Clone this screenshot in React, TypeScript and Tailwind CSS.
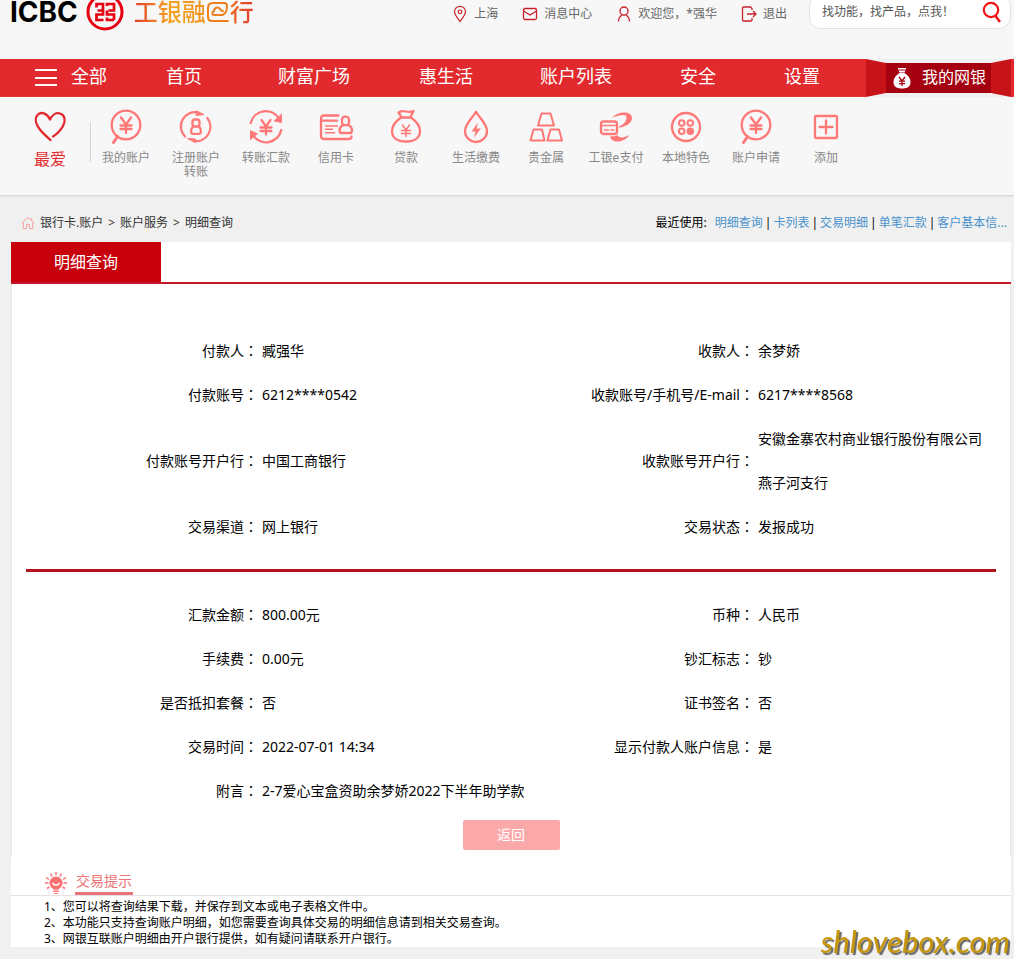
import type { ReactNode } from "react";

function Icon({ children }: { children: ReactNode }) {
  return (
    <svg
      width="36"
      height="36"
      viewBox="0 0 36 36"
      fill="none"
      stroke="#ff7878"
      strokeWidth="2.3"
      strokeLinecap="round"
      strokeLinejoin="round"
      aria-hidden="true"
    >
      {children}
    </svg>
  );
}

const MagnifierIcon = () => (
  <Icon>
    <circle cx="18" cy="17" r="14.3" />
    <path d="M9.5 28.5l-4 6" strokeWidth="3" />
    <path d="M13 9.5l5 7 5-7M18 16.5v8.5M12.5 17.5h11M12.5 21h11" />
  </Icon>
);

const RegisterIcon = () => (
  <Icon>
    <path d="M7 28.5A14.3 14.3 0 0 1 20 4.4M29.3 10A14.3 14.3 0 0 1 16 33" />
    <path d="M18.5 3l7.5 3.5-7.5 1zM17 34.5l-7.5-4 7.5.5z" fill="#ff7878" strokeWidth="1" />
    <rect x="14.5" y="11.5" width="7" height="7" rx="2.5" />
    <path d="M15.5 18.5c-2 1-2.5 3-2.3 6q.1 1.3 1.3 1.3h7q1.2 0 1.3-1.3c.2-3-.3-5-2.3-6" />
  </Icon>
);

const TransferIcon = () => (
  <Icon>
    <path d="M2.7 15A15.5 15.5 0 0 1 31 10.5M33.3 22A15.5 15.5 0 0 1 5 27" />
    <path d="M33.5 6.5v8l-7-1.5zM2.5 23v8.5l6.5-5.5z" fill="#ff7878" strokeWidth="1" />
    <path d="M13.5 12l4.5 6.5 4.5-6.5M18 18.5v8M12.5 19.5h11M12.5 23h11" />
  </Icon>
);

const CardIcon = () => (
  <Icon>
    <path d="M20.5 7.5H6q-3 0-3 3v17.5q0 3 3 3h25q2.5 0 2.5-2.5M4 12.7h15" />
    <path d="M7.5 18h12M7.5 21.3h7M7.5 24.7h9" strokeWidth="1.5" />
    <rect x="24" y="8.7" width="7" height="8.5" rx="3" />
    <path d="M24.5 17.5q-3 1.5-3 5 0 2.5 2 2.5h8.5q2 0 2-2.5 0-3.5-3-5" />
  </Icon>
);

const LoanIcon = () => (
  <Icon>
    <path d="M13.5 9L10.5 4.5q3.5-2 7.5-1t7.5-.5L22.5 9" />
    <path d="M13 9.5h10c5.500 4 9 9 9 13.500 0 7-5.500 10.500-14 10.500S4 30 4 23c0-4.500 3.500-9.500 9-13.500z" />
    <path d="M14.5 17l3.5 5 3.5-5M18 22v6.5M13.5 22.5h9M13.5 25.5h9" strokeWidth="1.5" />
  </Icon>
);

const UtilityIcon = () => (
  <Icon>
    <path d="M18 3.7c3.5 6.3 11 12 11 19.3a11 11 0 0 1-22 0c0-7.3 7.5-13 11-19.3z" />
    <path d="M20 14.5l-6.5 9h4l-1.5 6 7-9h-4.5z" fill="#ff7878" stroke="none" />
  </Icon>
);

const GoldIcon = () => (
  <Icon>
    <path d="M13.5 5.500h9L26 17.500H10z" strokeWidth="2" />
    <path d="M5.5 21.500h8.500l2.500 11H2.500zM22.500 21.500H31l3 11H19.500z" strokeWidth="2" />
  </Icon>
);

const EPayIcon = () => (
  <Icon>
    <path
      d="M14 9.5C17 6.5 21 4.5 26 4.5c5 0 8 2 8 5.5 0 5.5-7 9-14 10-3 8 1.5 12.5 11.5 7-3 4-7 6.500-12 6.500-4.500 0-7-2-7.500-5.500l3-9L22 18c4-1.500 6.500-5 6.500-8.500 0-3.500-5-3-14.500 0z"
      fill="#ff7878"
      stroke="none"
    />
    <rect x="3" y="13.5" width="16" height="12.5" rx="2.5" stroke="#f7f7f7" strokeWidth="4.5" fill="#f7f7f7" />
    <rect x="3" y="13.5" width="16" height="12.5" rx="2.5" />
    <path d="M3.5 17.5h15M6.5 22h4M13 22h3" strokeWidth="1.5" />
  </Icon>
);

const LocalIcon = () => (
  <Icon>
    <circle cx="18" cy="19" r="14" />
    <circle cx="13.7" cy="15" r="2.8" strokeWidth="2" />
    <circle cx="22.3" cy="15" r="2.8" strokeWidth="2" />
    <circle cx="13.7" cy="23.3" r="2.8" strokeWidth="2" />
    <circle cx="22.3" cy="23.3" r="2.8" strokeWidth="2" fill="#ff7878" />
  </Icon>
);

const AddIcon = () => (
  <Icon>
    <rect x="7" y="8" width="22" height="22" rx="1" />
    <path d="M18 12.5v13M11.5 19h13" />
  </Icon>
);

const shortcuts = [
  { label: "我的账户", icon: <MagnifierIcon /> },
  { label: "注册账户转账", icon: <RegisterIcon /> },
  { label: "转账汇款", icon: <TransferIcon /> },
  { label: "信用卡", icon: <CardIcon /> },
  { label: "贷款", icon: <LoanIcon /> },
  { label: "生活缴费", icon: <UtilityIcon /> },
  { label: "贵金属", icon: <GoldIcon /> },
  { label: "工银e支付", icon: <EPayIcon /> },
  { label: "本地特色", icon: <LocalIcon /> },
  { label: "账户申请", icon: <MagnifierIcon /> },
  { label: "添加", icon: <AddIcon /> },
];

const menu = [
  { label: "首页", width: "w-[120px]" },
  { label: "财富广场", width: "w-[140px]" },
  { label: "惠生活", width: "w-[124px]" },
  { label: "账户列表", width: "w-[136px]" },
  { label: "安全", width: "w-[108px]" },
  { label: "设置", width: "w-[100px]" },
];

const recent = ["明细查询", "卡列表", "交易明细", "单笔汇款", "客户基本信..."];

const parties = [
  ["付款人", "臧强华", "收款人", "余梦娇"],
  ["付款账号", "6212****0542", "收款账号/手机号/E-mail", "6217****8568"],
  ["付款账号开户行", "中国工商银行", "收款账号开户行", "安徽金寨农村商业银行股份有限公司燕子河支行"],
  ["交易渠道", "网上银行", "交易状态", "发报成功"],
];

const amounts = [
  ["汇款金额", "800.00元", "币种", "人民币"],
  ["手续费", "0.00元", "钞汇标志", "钞"],
  ["是否抵扣套餐", "否", "证书签名", "否"],
  ["交易时间", "2022-07-01 14:34", "显示付款人账户信息", "是"],
  ["附言", "2-7爱心宝盒资助余梦娇2022下半年助学款"],
];

function Label({ text }: { text: string }) {
  return (
    <th scope="row" className="w-1/4 pr-0.5 text-right font-normal whitespace-nowrap">
      {text}
      <span className="font-['Noto_Sans_CJK_TC',sans-serif] leading-none">：</span>
    </th>
  );
}

function DetailTable({ rows }: { rows: string[][] }) {
  return (
    <div className="pr-1.5">
      <table className="w-full table-fixed border-collapse text-sm leading-11">
        <tbody>
          {rows.map((r) => (
            <tr key={r[0]}>
              <Label text={r[0]} />
              <td className="w-1/4 pl-0.5" colSpan={r.length === 2 ? 3 : 1}>
                {r[1]}
              </td>
              {r.length === 4 && (
                <>
                  <Label text={r[2]} />
                  <td className="w-1/4 pr-3 pl-0.5">{r[3]}</td>
                </>
              )}
            </tr>
          ))}
        </tbody>
      </table>
    </div>
  );
}

function Logo() {
  return (
    <a href="#" className="flex h-6 items-center pl-2.5" aria-label="ICBC 工银融e行">
      <span className="font-['Inter',sans-serif] text-[28px] leading-6 font-bold text-black">ICBC</span>
      <svg className="ml-2 shrink-0" width="38" height="38" viewBox="0 0 38 38" fill="none" stroke="#e60012">
        <circle cx="19" cy="19" r="17" strokeWidth="3" />
        <path
          d="M10.5 14.5V11H17v6.500h-5.500M17 17.500v4h-6.500V27H17.500M28 27h-7v-2.500M21 13V11h7v6.500h-5.500M21 17.500v4h7V27"
          strokeWidth="2.7"
        />
      </svg>
      <span className="ml-2.5 bg-linear-to-r from-[#e2382c] via-[#f5a21e] to-[#f0901a] bg-clip-text text-2xl leading-6 font-medium text-transparent">
        工银融
      </span>
      <svg
        width="24"
        height="24"
        viewBox="0 0 24 24"
        fill="none"
        stroke="#ee7f1c"
        strokeWidth="2"
        strokeLinecap="round"
      >
        <path d="M22 21H6q-4 0-4-4V8q0-5 5-5h11q3 0 3 3c0 5-2 9-6 9H8c-2 0-2.5-3 0-4 0-3 4-5 6-2 1 1 1 2 3 2" />
      </svg>
      <span className="bg-linear-to-r from-[#ec6a22] to-[#e2382c] bg-clip-text text-2xl leading-6 font-medium text-transparent">
        行
      </span>
    </a>
  );
}

export default function App() {
  return (
    <div className="min-h-screen bg-[#f0f0f0] font-['Noto_Sans','Noto_Sans_CJK_SC',sans-serif] text-black">
      {/* Top bar */}
      <header className="flex h-[59px] items-start justify-between bg-[#f7f7f7] pr-[3px]">
        <Logo />
        <div className="flex items-start text-xs text-[#666]">
          <div className="flex h-7 items-center gap-6 pr-[22px]">
            <a href="#" className="flex items-center gap-1.5">
              <svg width="16" height="18" viewBox="0 0 16 18" fill="none" stroke="#c8202c" strokeWidth="1.2">
                <path d="M8 16.5C5 12.5 2.5 9.5 2.5 6.8a5.5 5.5 0 0 1 11 0c0 2.7-2.5 5.7-5.5 9.7z" />
                <circle cx="8" cy="6.8" r="1.8" />
              </svg>
              上海
            </a>
            <a href="#" className="flex items-center gap-1.5">
              <svg width="16" height="18" viewBox="0 0 16 18" fill="none" stroke="#c8202c" strokeWidth="1.3">
                <rect x="1.5" y="3.5" width="13" height="11" rx="1.5" />
                <path d="M1.5 6l6.5 4 6.5-4" />
              </svg>
              消息中心
            </a>
            <a href="#" className="flex items-center gap-1.5">
              <svg width="16" height="18" viewBox="0 0 16 18" fill="none" stroke="#c8202c" strokeWidth="1.3">
                <circle cx="8" cy="6" r="4" />
                <path d="M2.5 16.5c0-3.5 1.5-5.5 4-6.5M13.5 16.5c0-3.5-1.5-5.5-4-6.5" />
              </svg>
              欢迎您，*强华
            </a>
            <a href="#" className="flex items-center gap-1.5">
              <svg width="16" height="18" viewBox="0 0 16 18" fill="none" stroke="#c8202c" strokeWidth="1.3">
                <path d="M11 5V3.5L9.5 2h-7q-1 0-1 1v12q0 1 1 1h7.5q1 0 1-1v-2M6 9h9M12 6l3 3-3 3" />
              </svg>
              退出
            </a>
          </div>
          <form className="-mt-1.5 flex h-[35px] w-[202px] items-center rounded-xl border border-[#e2e2e2] bg-white pr-2 pl-3">
            <input
              type="text"
              aria-label="搜索"
              placeholder="找功能，找产品，点我！"
              className="min-w-0 flex-1 text-xs outline-none placeholder:text-[#555]"
            />
            <button type="button" aria-label="搜索">
              <svg width="20" height="22" viewBox="0 0 20 22" fill="none" stroke="#f01414" strokeWidth="2.2">
                <circle cx="9" cy="9" r="7.2" />
                <path d="M13.5 15l4.5 6" strokeWidth="2.5" />
              </svg>
            </button>
          </form>
        </div>
      </header>

      {/* Main menu */}
      <nav className="flex h-[38px] justify-between bg-[#e22a2e] text-lg leading-6 text-white">
        <div className="flex items-center pb-1">
          <button type="button" className="flex w-[124px] items-center gap-3.5 pl-[35px]">
            <svg width="22" height="20" viewBox="0 0 22 20" stroke="#fff" strokeWidth="2">
              <path d="M0 4h22M0 12h22M0 19h22" />
            </svg>
            全部
          </button>
          {menu.map((m) => (
            <a key={m.label} href="#" className={`${m.width} text-center`}>
              {m.label}
            </a>
          ))}
        </div>
        <div className="flex pr-[3px]">
          <a href="#" className="flex items-center bg-[#f0f0f0] text-base">
            <svg width="20" height="38" viewBox="0 0 20 38">
              <path d="M0 0l20 4v30L0 38z" fill="#c81418" />
            </svg>
            <span className="flex h-[30px] w-[105px] items-center gap-2.5 bg-[#a5000f] pl-1.5 whitespace-nowrap">
              <svg width="20" height="24" viewBox="0 0 20 24" fill="#fff">
                <path d="M6 2h8v1.5H6zM6.5 4.5h7l-1 2h-5z" />
                <path d="M7.5 7h5c4 2.5 6 5.5 6 9 0 4.5-3 6.5-8.5 6.5S1.5 20.5 1.5 16c0-3.5 2-6.5 6-9z" />
                <path
                  d="M7 11l3 4 3-4M10 15v5M7 15.2h6M7 17.7h6"
                  fill="none"
                  stroke="#a5000f"
                  strokeWidth="1.3"
                />
              </svg>
              <span className="pb-0.5">我的网银</span>
            </span>
            <svg width="20" height="38" viewBox="0 0 20 38">
              <path d="M20 0L0 4v30l20 4z" fill="#c81418" />
            </svg>
          </a>
        </div>
      </nav>

      {/* Shortcuts */}
      <section className="flex h-[98px] bg-[#f7f7f7] pt-[11px] pl-2.5 shadow-[0_1px_2px_#ccc]">
        <a href="#" className="flex w-20 flex-col items-center text-base text-[#e22a2e]">
          <svg width="36" height="36" viewBox="0 0 36 36" fill="none" stroke="#e22a2e" strokeLinecap="round">
            <path
              d="M18 11.5C20 7 24 4.5 28 5.5c5 1.5 6 7 3 12.5-2.5 4.500-6 8-10 10.500M18 11.500C15 5 9 3.500 6 6.500c-4 4-2 10 1.500 14.500 3.500 4.500 7 7.500 11 11"
              strokeWidth="2.3"
            />
          </svg>
          <span className="leading-[30px]">最爱</span>
        </a>
        <div className="mt-3.5 h-10 w-px bg-[#d4d4d4]" />
        {shortcuts.map((s) => (
          <a key={s.label} href="#" className="flex w-[70px] flex-col items-center text-xs text-[#888]">
            {s.icon}
            <span className="mt-[7px] w-[58px] text-center leading-3.5">{s.label}</span>
          </a>
        ))}
      </section>

      {/* Breadcrumb */}
      <div className="flex h-[47px] items-center justify-between pt-2 pr-[7px] pl-[21px] text-xs">
        <div className="flex items-center gap-[5px] text-[#333]">
          <svg width="14" height="14" viewBox="0 0 15 14" fill="none" stroke="#f59a9a">
            <path d="M.5 7.5l7-6.5 7 6.5M2.5 6.5v6.5h3.5V8.5h3V13h3.5V6.5M11.5 4V1.5" />
          </svg>
          <span>银行卡.账户</span>
          <span>&gt;</span>
          <span>账户服务</span>
          <span>&gt;</span>
          <span>明细查询</span>
        </div>
        <div className="flex items-center">
          <span className="mr-2">最近使用:</span>
          {recent.map((r, i) => (
            <span key={r}>
              {i > 0 && <span className="px-0.5">|</span>}
              <a href="#" className="text-[#4a93cc]">
                {r}
              </a>
            </span>
          ))}
        </div>
      </div>

      <main className="mr-[3px] ml-[11px] bg-white">
        <div className="flex border-b-2 border-[#c2182a]">
          <h1 className="w-[150px] bg-[#c7000b] text-center text-base leading-10 text-white">明细查询</h1>
        </div>

        <div className="border-x border-[#e6e6e6] pt-[45px] pb-[7px]">
          <DetailTable rows={parties} />
          <hr className="mx-3.5 mt-5 mb-[21px] border-t-3 border-[#b5121b]" />
          <DetailTable rows={amounts} />
          <div className="flex justify-center pt-[7px]">
            <button type="button" className="h-[30px] w-[97px] rounded-xs bg-[#fba8aa] text-sm text-white">
              返回
            </button>
          </div>
        </div>

        {/* Tips */}
        <section>
          <div className="flex h-[39px] items-end gap-[7px] border-b border-[#e2e2e2] pl-[33px] text-[#ea7478]">
            <svg width="24" height="24" viewBox="0 0 24 24" fill="none" stroke="#ff7070" strokeWidth="1.5">
              <path d="M12 1v3M6.5 2.5l1.5 3M17.5 2.5l-1.5 3M2 6.5l3 2M22 6.5l-3 2M1 12h3.5M23 12h-3.5M3 17.5l2.5-1.5M21 17.5L18.5 16" />
              <circle cx="12" cy="12" r="6.5" fill="#ff7070" stroke="none" />
              <path d="M9 17h6v3.5l-1.5 2.5h-3L9 20.5z" fill="#ff7070" stroke="none" />
              <path d="M8.5 12l2 2h3l2-2" stroke="#fff" />
              <path d="M8.5 19h7M9 21.5h6" stroke="#fff" strokeWidth="1" />
            </svg>
            <h2 className="border-b-3 border-[#ea7478] px-px text-sm leading-[22px]">交易提示</h2>
          </div>
          <ol className="pt-[3px] pl-[33px] text-xs leading-4">
            <li>1、您可以将查询结果下载，并保存到文本或电子表格文件中。</li>
            <li>2、本功能只支持查询账户明细，如您需要查询具体交易的明细信息请到相关交易查询。</li>
            <li>3、网银互联账户明细由开户银行提供，如有疑问请联系开户银行。</li>
          </ol>
        </section>
      </main>

      <div className="fixed right-1 bottom-0.5 font-['Lato',sans-serif] text-[31px] leading-8 font-medium text-[#c8960c] italic text-shadow-[2px_2px_1px_#666]">
        shlovebox.com
      </div>
    </div>
  );
}
